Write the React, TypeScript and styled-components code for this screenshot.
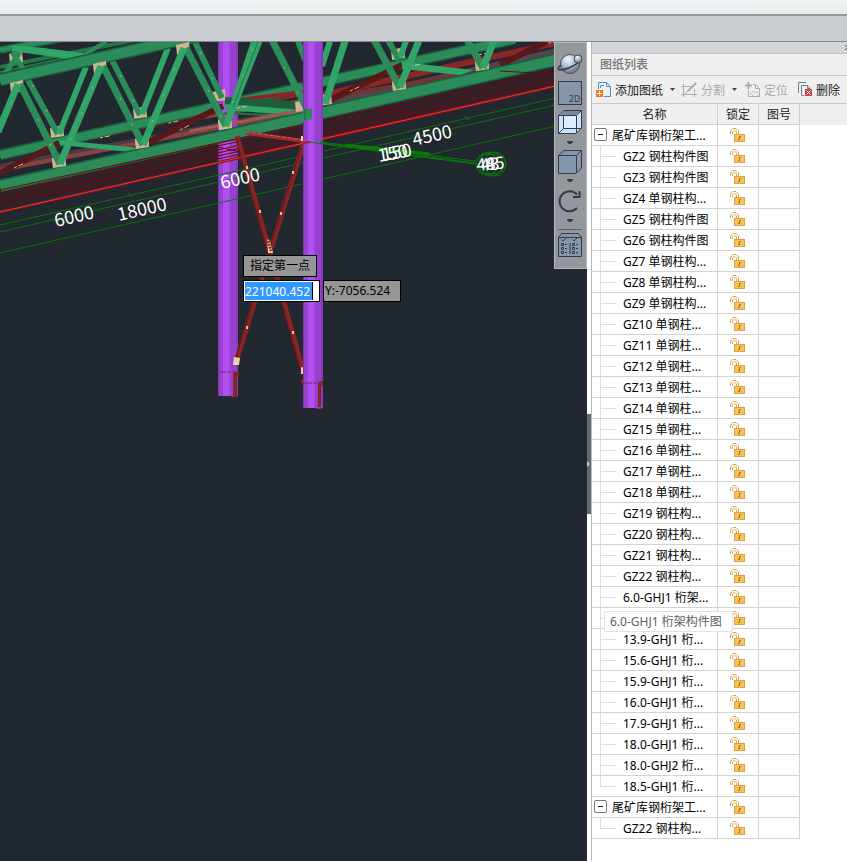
import React from 'react';
import styled, { createGlobalStyle } from 'styled-components';

const GlobalStyle = createGlobalStyle`
  * { box-sizing: border-box; }
  html, body { margin: 0; }
  body, button, input, table {
    font-family: "Noto Sans", "Noto Sans CJK SC", sans-serif;
    font-size: 12px;
    line-height: 16px;
  }
`;

const Page = styled.div`
  display: flex;
  flex-direction: column;
  min-height: 100vh;
  background: #fff;
`;

const WindowBar = styled.header`
  height: 14px;
  background: linear-gradient(#eff3f4, #e7eceb);
`;

const Ribbon = styled.div`
  height: 28px;
  background: #c9cdd2;
  border-top: 2px solid #949a9e;
  border-bottom: 1px solid #858a8f;
`;

const Workspace = styled.main`
  flex: 1;
  display: flex;
`;

const Viewport = styled.section`
  position: relative;
  flex: 1;
  min-width: 0;
  overflow: hidden;
  background: #22282f;
`;

const Drawing = styled.svg`
  position: absolute;
  inset: 0;
  width: 100%;
  height: 100%;
`;

const Prompt = styled.div`
  position: absolute;
  left: 243px;
  top: 213px;
  display: flex;
  flex-direction: column;
  align-items: flex-start;
  gap: 3px;
`;

const PromptRow = styled.div`
  display: flex;
  gap: 3px;
`;

const PromptBox = styled.label<{ $wide?: boolean }>`
  height: 22px;
  width: ${(p) => (p.$wide ? '78px' : '74px')};
  padding: ${(p) => (p.$wide ? '2px 1px' : '2px 6px')};
  border: 1px solid #000;
  background: #969696;
  color: #000;
  white-space: nowrap;
`;

const InputFrame = styled.div`
  display: flex;
  width: 77px;
  height: 22px;
  padding: 1px;
  border: 1px solid #000;
  background: #fff;
`;

const CoordInput = styled.input`
  width: 68px;
  height: 18px;
  padding: 0;
  border: 0;
  border-right: 1px solid #000;
  background: #3399ff;
  color: #fff;
  outline: none;
`;

const ViewTools = styled.nav`
  position: absolute;
  top: 0;
  right: 0;
  display: flex;
  flex-direction: column;
  align-items: center;
  width: 33px;
  height: 227px;
  padding: 6px 1px 0 0;
  background: #94979b;
  border: 1px solid #b7babd;
`;

const ToolButton = styled.button<{ $h: number }>`
  display: flex;
  flex: none;
  align-items: center;
  justify-content: center;
  width: 100%;
  height: ${(p) => p.$h}px;
  padding: 0;
  border: 0;
  background: none;
`;

const ToolRule = styled.div`
  flex: none;
  width: 24px;
  height: 1px;
  margin: 2px 0 1px;
  background: #5c636b;
`;

const Splitter = styled.div`
  display: flex;
  align-items: center;
  flex: none;
  width: 4px;
  padding-top: 25px;
  background: #fff;
`;

const SplitHandle = styled.button`
  display: flex;
  align-items: center;
  width: 4px;
  height: 100px;
  padding: 0;
  border: 0;
  background: #5d6a78;
`;

const Panel = styled.aside`
  flex: none;
  width: 256px;
  overflow: hidden;
  border-left: 1px solid #b9bbbf;
  background: #fff;
`;

const PanelGrip = styled.div`
  display: flex;
  justify-content: flex-end;
  height: 12px;
  background: #d3d5db;
  border-bottom: 1px solid #c3c5c9;
`;

const CloseButton = styled.button`
  flex: none;
  width: 3px;
  padding: 0;
  border: 0;
  overflow: hidden;
  background: none;
  display: flex;
  align-items: center;
`;

const PanelTitle = styled.h2`
  margin: 0;
  height: 22px;
  padding: 3px 8px;
  font-size: 12px;
  font-weight: 500;
  color: #777;
  background: #efefef;
  border-bottom: 1px solid #c9c9c9;
`;

const ActionBar = styled.div`
  display: flex;
  align-items: center;
  height: 28px;
  padding-left: 4px;
  background: #efefef;
  border-bottom: 1px solid #c9c9c9;
`;

const Action = styled.button<{ $gap: number }>`
  display: flex;
  flex: none;
  align-items: center;
  gap: 4px;
  margin-right: ${(p) => p.$gap}px;
  padding: 0;
  border: 0;
  background: none;
  color: #222;
  white-space: nowrap;
  &:disabled { color: #a9a9a9; }
`;

const ActionLabel = styled.span`
  padding-top: 2px;
`;

const Caret = styled.svg`
  flex: none;
  width: 5px;
  height: 3px;
  margin-left: 3px;
`;

const TableArea = styled.div`
  background: linear-gradient(#efefef 21px, #fff 21px);
`;

const Table = styled.table`
  table-layout: fixed;
  width: 208px;
  border-collapse: separate;
  border-spacing: 0;
  color: #000;
`;

const HeadCell = styled.th<{ $w: number }>`
  width: ${(p) => p.$w}px;
  height: 21px;
  padding: 2px 0 0;
  font-weight: 400;
  color: #222;
  background: #efefef;
  border-right: 1px solid #cfcfcf;
  border-bottom: 1px solid #cfcfcf;
`;

const Cell = styled.td`
  position: relative;
  height: 21px;
  padding: 0;
  border-right: 1px solid #d3d3d3;
  border-bottom: 1px solid #d3d3d3;
`;

const Name = styled.div`
  display: flex;
  align-items: flex-start;
  height: 20px;
  padding-left: 2px;
  line-height: 22px;
  white-space: nowrap;
`;

const Expander = styled.button`
  display: flex;
  align-items: center;
  justify-content: center;
  width: 13px;
  height: 13px;
  margin: 3px 5px 0 0;
  padding: 0;
  border: 1px solid #777;
  border-radius: 2px;
  background: #fff;
`;

const Branch = styled.span<{ $last: boolean }>`
  width: 16px;
  height: 20px;
  margin: 0 7px 0 6px;
  background:
    linear-gradient(#dedede, #dedede) 0 0 / 1px ${(p) => (p.$last ? '10px' : '20px')} no-repeat,
    linear-gradient(#dedede, #dedede) 0 10px / 16px 1px no-repeat;
`;

const LockButton = styled.button`
  display: flex;
  justify-content: center;
  width: 100%;
  height: 20px;
  padding: 3px 1px 0 0;
  border: 0;
  background: none;
`;

const Tooltip = styled.div`
  position: absolute;
  z-index: 1;
  left: 12px;
  top: 24px;
  width: 129px;
  height: 21px;
  padding: 2px 5px;
  border: 1px solid #e2e2e2;
  border-radius: 2px;
  background: #fff;
  color: #606060;
  white-space: nowrap;
`;

type Pt = [number, number, number, number];

const G = { mid: '#2b8c5a', light: '#31a467', dark: '#1c5e3d', deep: '#237549' };

function Beam({ p, w, c, edge }: { p: Pt; w: number; c: string; edge?: string }) {
  const [x1, y1, x2, y2] = p;
  return (
    <>
      {edge && <line x1={x1} y1={y1} x2={x2} y2={y2} stroke={edge} strokeWidth={w} />}
      <line x1={x1} y1={y1} x2={x2} y2={y2} stroke={c} strokeWidth={edge ? w - 3 : w} />
    </>
  );
}

function Gusset({ x, y }: { x: number; y: number }) {
  return <path d={`M${x - 7} ${y - 4}L${x + 6} ${y - 7}L${x + 7} ${y + 4}L${x - 6} ${y + 6}Z`} fill="#cdb591" />;
}

const backDiagonals: Pt[] = [
  [28, 80, 58, 134], [112, 60, 140, 115], [195, 42, 222, 98], [297, 38, 305, 60], [387, 38, 399, 60],
];
const backDiagonalsLight: Pt[] = [
  [59, 134, 86, 67], [142, 114, 168, 48], [322, 66, 331, 38], [400, 58, 407, 38],
];
const frontDiagonals: Pt[] = [
  [20, 84, 60, 164], [103, 66, 143, 145], [186, 48, 226, 126], [271, 38, 308, 111], [373, 38, 400, 88], [466, 38, 483, 68],
];
const frontDiagonalsLight: Pt[] = [
  [-2, 132, 18, 84], [60, 164, 101, 66], [143, 145, 184, 48], [325, 104, 346, 38], [400, 87, 420, 38], [483, 68, 495, 38],
];
const cableStarts = [190, 193, 197, 200, 203, 206];
const dimensionLines: Pt[] = [
  [0, 225, 298, 157], [324, 151, 560, 97], [0, 232, 560, 104], [0, 253, 560, 125],
];

function Column({ x, bottom }: { x: number; bottom: number }) {
  return (
    <g>
      <rect x={x} y="38" width="20" height={bottom - 38} fill="#9642cf" />
      <path d={`M${x} ${bottom - 1}l5 1 5-1 5 2 5-1v-2h-20z`} fill="#9642cf" />
      <rect x={x + 5} y="38" width="6" height={bottom - 38} fill="#b14ff2" />
      <rect x={x + 11} y="38" width="1" height={bottom - 38} fill="#a548e3" />
      <rect x={x} y="38" width="1" height={bottom - 38} fill="#7c34ad" />
      <rect x={x + 18} y="38" width="2" height={bottom - 38} fill="#873bbb" />
    </g>
  );
}

function Model() {
  return (
    <Drawing viewBox="0 42 587 819" preserveAspectRatio="xMinYMin slice" aria-label="钢桁架模型">
      <Beam p={[0, 50, 64, 38]} w={8} c={G.mid} edge={G.dark} />
      <Beam p={[0, 67, 140, 39]} w={4} c={G.deep} />
      <Beam p={[0, 72, 92, 52]} w={2} c={G.deep} />
      <Gusset x={16} y={58} />
      <Beam p={[4, 75, 20, 52]} w={5} c={G.mid} />
      <Beam p={[12, 52, 24, 70]} w={5} c={G.mid} />
      <Beam p={[86, 54, 108, 40]} w={4} c={G.mid} />
      <path d="M12 45L44 48 90 54 82 61 12 51Z" fill={G.light} />

      <Beam p={[0, 168, 280, 115]} w={8} c="#4f3a41" />
      <Beam p={[324, 106, 560, 52]} w={9} c="#50474c" />
      <Beam p={[60, 141, 303, 93]} w={6} c="#8a2627" />
      <Beam p={[60, 144, 303, 101]} w={2} c="#541a1c" />
      <Beam p={[0, 170, 303, 111]} w={4} c="#874142" />
      <Beam p={[322, 95, 560, 42]} w={6} c="#8a2627" />
      <Beam p={[322, 98, 560, 59]} w={4} c="#743233" />
      <Beam p={[0, 155, 303, 87]} w={11} c={G.mid} edge={G.dark} />
      <Beam p={[322, 82, 515, 39]} w={11} c={G.mid} edge={G.dark} />
      <Column x={218} bottom={396} />
      <Beam p={[238, 100, 303, 92]} w={4} c="#8a2627" />
      <Beam p={[190, 120, 303, 100]} w={3} c="#874142" />
      <Beam p={[0, 173, 59, 143]} w={6} c="#581719" />
      <Beam p={[143, 145, 223, 106]} w={6} c="#581719" />
      <Beam p={[322, 104, 402, 65]} w={6} c="#581719" />
      <Beam p={[500, 65, 554, 38]} w={6} c="#581719" />

      {[[57, 132], [140, 113], [219, 96], [325, 100], [398, 54]].map(([x, y]) => <Gusset key={x} x={x} y={y} />)}
      {backDiagonals.map((p) => <Beam key={p.join()} p={p} w={6} c={G.mid} />)}
      {backDiagonalsLight.map((p) => <Beam key={p.join()} p={p} w={6} c={G.light} />)}

      <path d="M60 140L140 148 130 152 60 145Z" fill={G.light} />
      <Beam p={[225, 101, 305, 106]} w={8} c={G.dark} />
      <Beam p={[225, 107, 305, 113]} w={6} c={G.light} />
      <Beam p={[225, 113, 290, 116]} w={2} c={G.deep} />
      <path d="M402 62L474 70 460 75 402 69Z" fill={G.light} />
      <Beam p={[190, 131, 303, 110]} w={3} c="#9c5a51" />

      <g stroke="#d9c08f" strokeWidth="1" strokeDasharray="3 2 5 60">
        <path d="M14 168L59 147M100 138L302 94M180 130L222 109M350 91L402 67M410 66L555 42" />
      </g>

      <Beam p={[0, 80, 206, 34]} w={13} c={G.mid} edge={G.dark} />
      {[[17, 87], [100, 68], [183, 49], [59, 162], [142, 143], [225, 124], [302, 106], [399, 85], [482, 65]].map(([x, y]) => (
        <Gusset key={x} x={x} y={y} />
      ))}
      <Beam p={[0, 186, 309, 117]} w={13} c={G.mid} edge={G.dark} />
      <Beam p={[322, 113, 560, 59]} w={13} c={G.mid} edge={G.dark} />
      {[[59, 162], [142, 143], [225, 124], [399, 85], [482, 65]].map(([x, y]) => <Gusset key={x} x={x} y={y} />)}
      {frontDiagonals.map((p) => <Beam key={p.join()} p={p} w={7} c={G.mid} />)}
      {frontDiagonalsLight.map((p) => <Beam key={p.join()} p={p} w={7} c={G.light} />)}
      <path d="M223 126L252 38H264L229 127Z" fill={G.light} />
      <path d="M233 107L258 42" stroke={G.deep} strokeWidth="1" />
      <g stroke="#b0bd8b" strokeWidth="1" strokeDasharray="2 26">
        <path d="M33 85L58 132M38 119L58 161M70 140L98 75M120 75L140 113M120 98L140 142M152 122L180 56M200 52L220 95M208 90L224 123M233 103L254 46M284 67L305 107" />
      </g>

      <g stroke="#74060a" strokeWidth="1">
        {cableStarts.map((y) => <path key={y} d={`M0 ${y}L560 ${y - 121}`} />)}
        <path d="M38 183L95 193M208 145L260 156M380 108L430 116M500 71L553 74" />
      </g>
      <Beam p={[0, 212, 560, 85]} w={3} c="#8e0d12" />
      <Beam p={[0, 212, 560, 85]} w={1} c="#c74548" />
      <g stroke="#067406" strokeWidth="1">
        {dimensionLines.map((p) => <path key={p.join()} d={`M${p[0]} ${p[1]}L${p[2]} ${p[3]}`} />)}
        <path d="M128 193l5 4M465 116l4 4" />
      </g>

      <Beam p={[246, 133, 304, 141]} w={4} c="#9c2c30" />
      <path d="M246 132L304 140" stroke="#d1595c" strokeDasharray="4 2" />
      <Beam p={[237, 136, 304, 374]} w={5} c="#892426" />
      <Beam p={[303, 145, 236, 362]} w={5} c="#892426" />
      <path d="M236 138L301 372M301 148L235 360" stroke="#611617" fill="none" />
      <path d="M247 166v3M260 210v3M281 212v3M293 171v3M247 326v3M293 331v3" stroke="#e4c69c" strokeWidth="2" />
      <path d="M267 239l3 2 3 12h-5zM234 357l6 1-1 7h-6zM301 367l4 1-1 6h-3zM301 136h3v5h-3z" fill="#ecd1a6" />
      <path d="M268 241l3 10" stroke="#892426" strokeWidth="3" strokeDasharray="2 1" />

      <Column x={303} bottom={408} />
      <path d="M303 110l9-2v11l-9 2z" fill={G.mid} />
      <path d="M305 109v11" stroke={G.dark} />
      <Beam p={[303, 143, 310, 142]} w={2} c="#a8202a" />
      <g fill="#892426">
        <path d="M234 372h5v4h-2v21h-4v-23zM320 381h3v5h-2v21h-3v-24zM301 379h2v4h-2z" />
      </g>
      <path d="M217 372h18M303 383h17" stroke="#7b2466" strokeDasharray="4 1" />

      <g fill="none" stroke="#087b08">
        <path d="M309 142L475 164M320 142L475 161M320 143L475 163" strokeWidth="1" />
        <path d="M345 145L430 154" strokeWidth="3" />
        <ellipse cx="487" cy="164" rx="11" ry="11" />
        <ellipse cx="491" cy="164" rx="12" ry="12" />
        <ellipse cx="495" cy="164" rx="11" ry="12" />
        <ellipse cx="491" cy="164" rx="15" ry="10" />
      </g>
      <g fill="#fff" fontFamily="Noto Sans CJK SC, sans-serif" fontSize="18">
        <text transform="translate(56 227) rotate(-13)">6000</text>
        <text transform="translate(119 221) rotate(-13)">18000</text>
        <text transform="translate(222 189) rotate(-13)">6000</text>
        <text transform="translate(414 146) rotate(-13)">4500</text>
        <text transform="translate(379 162) rotate(-10)">150</text>
        <text transform="translate(383 161) rotate(-10)">150</text>
        <g fontSize="17">
          <text transform="translate(477 171) rotate(-5)">48</text>
          <text transform="translate(481 171) rotate(-5)">43</text>
          <text transform="translate(486 170) rotate(-5)">45</text>
        </g>
      </g>
    </Drawing>
  );
}

const ink = '#333d49';

function SphereIcon() {
  return (
    <svg width="26" height="24" viewBox="0 0 26 24">
      <defs>
        <radialGradient id="ball" cx="0.4" cy="0.25" r="0.8">
          <stop offset="0" stopColor="#f4f8fc" />
          <stop offset="0.45" stopColor="#b7c3d0" />
          <stop offset="1" stopColor="#59697c" />
        </radialGradient>
      </defs>
      <circle cx="13" cy="12" r="9.5" fill="url(#ball)" stroke="#46515f" />
      <path d="M4 13C1 15 0 18 3 18 8 18 18 14 22 10" fill="none" stroke={ink} strokeWidth="1.5" />
      <circle cx="21" cy="7" r="4" fill="url(#ball)" stroke="#46515f" />
    </svg>
  );
}

function FlatIcon() {
  return (
    <svg width="24" height="24" viewBox="0 0 24 24">
      <rect x="0.5" y="0.5" width="23" height="23" fill="#8595aa" stroke={ink} />
      <text x="11" y="21" fontSize="8" fontFamily="DejaVu Sans, sans-serif" fill={ink}>2D</text>
    </svg>
  );
}

function CubeIcon({ wire }: { wire?: boolean }) {
  return (
    <svg width="24" height="24" viewBox="0 0 24 24">
      <path d="M.5 5.5L6 .5H23.5V18L18 23.5H.5Z" fill={wire ? '#c9e4fc' : '#8595aa'} stroke={ink} />
      {wire && (
        <>
          <path d="M1.5 5L6 1H23L18 5Z" fill="#77899a" />
          <rect x="6" y="6" width="12" height="12" fill="#dceeff" />
          <path d="M5.5 6V18.5L1 23M5.5 18.5H23" fill="none" stroke={ink} />
        </>
      )}
      <path d="M.5 5.5H18.5V23M18.5 5.5L23.5.5" fill="none" stroke={ink} />
    </svg>
  );
}

function ToolArrow({ label }: { label: string }) {
  return (
    <ToolButton $h={12} aria-label={label}>
      <svg width="6" height="4"><path d="M0 0h6v1L4 3H2L0 1Z" fill={ink} /></svg>
    </ToolButton>
  );
}

function RotateIcon() {
  return (
    <svg width="24" height="24" viewBox="0 0 24 24" fill="none" stroke={ink} strokeWidth="2">
      <path d="M19 19A10 10 0 1 1 19 5.500" />
      <path d="M21.500 2V8H15" />
    </svg>
  );
}

function GridIcon() {
  return (
    <svg width="24" height="24" viewBox="0 0 24 24" fill="none" stroke={ink}>
      <path d="M.5 4.500L3.500.5H20.500L23.500 4.500V23.500H.5Z" fill="#8595aa" />
      <path d="M.5 4.500H23.500M12 10V21M3.500 6.500l1.500 1.500 3-3M14.500 6.500l1.500 1.500 3-3" />
      <path d="M3.500 10.500h2v2h-2zM3.500 14.500h2v2h-2zM3.500 18.500h2v2h-2zM14.500 10.500h2v2h-2zM14.500 14.500h2v2h-2zM14.500 18.500h2v2h-2z" />
      <path d="M7 11.500h2M7 15.500h2M7 19.500h2M18 11.500h2M18 15.500h2M18 19.500h2" />
    </svg>
  );
}

function ViewToolbar() {
  return (
    <ViewTools aria-label="视图工具">
      <ToolButton $h={30} aria-label="动态观察"><SphereIcon /></ToolButton>
      <ToolButton $h={28} aria-label="二维视图"><FlatIcon /></ToolButton>
      <ToolButton $h={30} aria-label="线框"><CubeIcon wire /></ToolButton>
      <ToolArrow label="更多线框" />
      <ToolButton $h={26} aria-label="实体"><CubeIcon /></ToolButton>
      <ToolArrow label="更多实体" />
      <ToolButton $h={28} aria-label="旋转"><RotateIcon /></ToolButton>
      <ToolArrow label="更多旋转" />
      <ToolRule />
      <ToolButton $h={28} aria-label="显示设置"><GridIcon /></ToolButton>
    </ViewTools>
  );
}

function AddIcon() {
  return (
    <svg width="15" height="16" viewBox="0 0 15 16" fill="none" stroke="#4a8fd4">
      <path d="M2.500 7V.5H10.500L14.500 4.500V14.500H8M4.500 6V3.500H8M10.500.5V4.500H14" />
      <rect x="0" y="8" width="7" height="7" fill="#f0771c" stroke="none" />
      <path d="M1 11.500H6M3.500 9V14" stroke="#fff" />
    </svg>
  );
}

function SplitIcon() {
  return (
    <svg width="16" height="16" viewBox="0 0 16 16" fill="none" stroke="#adadad">
      <path d="M0 4.500H10M2.500 2V15M0 12.500H16M13.500 7V15M4 12L7 8" />
      <path d="M7 9L15 1" strokeWidth="2" />
    </svg>
  );
}

function LocateIcon() {
  return (
    <svg width="15" height="16" viewBox="0 0 15 16" fill="none" stroke="#adadad">
      <path d="M0 3.500H7M3.500 0V7" strokeWidth="2" />
      <path d="M8 2.500H10.500L14.500 6.500V14.500H3.500V8M10.500 2.500V6.500H14" />
      <path d="M5 11L8 14M8 9L13 14M11 9L14 12M8 9L5 12M12 9L7 14" strokeDasharray="1 1" />
    </svg>
  );
}

function DeleteIcon() {
  return (
    <svg width="14" height="15" viewBox="0 0 14 15" fill="none" stroke="#6f8490">
      <path d="M.5 11V.5H8M6 13.500H3.500V3.500H9.500L12.500 6.500M9.500 3.500V6.500H12" />
      <rect x="7" y="7" width="7" height="7" fill="#cd3f4a" stroke="none" />
      <path d="M8.500 8.500L12.500 12.500M12.500 8.500L8.500 12.500" stroke="#fff" />
    </svg>
  );
}

function Down() {
  return <Caret viewBox="0 0 5 3"><path d="M0 0H5L2.500 3Z" fill="#444" /></Caret>;
}

function LockIcon() {
  return (
    <svg width="15" height="14" viewBox="0 0 15 14" fill="none">
      <path d="M.5 6V3L3 .5H6L8.500 3V6M2.500 6V4L4 2.500H5L6.500 4V6" stroke="#dba54f" />
      <rect x="4.500" y="6.500" width="10" height="7" fill="#f7c352" stroke="#dd9f51" />
      <path d="M9 8.500H11M9.500 9V11.500M8 11.500H10" stroke="#b36f1e" />
    </svg>
  );
}

interface Row { name: string; root?: boolean; last?: boolean; tip?: string }

const rows: Row[] = [
  { name: '尾矿库钢桁架工...', root: true },
  { name: 'GZ2 钢柱构件图' },
  { name: 'GZ3 钢柱构件图' },
  { name: 'GZ4 单钢柱构...' },
  { name: 'GZ5 钢柱构件图' },
  { name: 'GZ6 钢柱构件图' },
  ...[7, 8, 9].map((n) => ({ name: `GZ${n} 单钢柱构...` })),
  ...[10, 11, 12, 13, 14, 15, 16, 17, 18].map((n) => ({ name: `GZ${n} 单钢柱...` })),
  ...[19, 20, 21, 22].map((n) => ({ name: `GZ${n} 钢柱构...` })),
  { name: '6.0-GHJ1 桁架...', tip: '6.0-GHJ1 桁架构件图' },
  { name: '' },
  ...['13.9-GHJ1', '15.6-GHJ1', '15.9-GHJ1', '16.0-GHJ1', '17.9-GHJ1', '18.0-GHJ1', '18.0-GHJ2'].map((n) => ({ name: `${n} 桁...` })),
  { name: '18.5-GHJ1 桁...', last: true },
  { name: '尾矿库钢桁架工...', root: true },
  { name: 'GZ22 钢柱构...', last: true },
];

function DrawingRow({ row }: { row: Row }) {
  return (
    <tr>
      <Cell>
        <Name>
          {row.root ? (
            <Expander aria-label="折叠">
              <svg width="5" height="1"><path d="M0 .5H5" stroke="#222" /></svg>
            </Expander>
          ) : (
            <Branch $last={!!row.last} />
          )}
          {row.name}
        </Name>
        {row.tip && <Tooltip role="tooltip">{row.tip}</Tooltip>}
      </Cell>
      <Cell><LockButton aria-label="锁定"><LockIcon /></LockButton></Cell>
      <Cell />
    </tr>
  );
}

function DrawingPanel() {
  return (
    <Panel>
      <PanelGrip>
        <CloseButton aria-label="关闭">
          <svg width="7" height="7"><path d="M1 1L6 6M6 1L1 6" stroke="#555" /></svg>
        </CloseButton>
      </PanelGrip>
      <PanelTitle>图纸列表</PanelTitle>
      <ActionBar>
        <Action $gap={6}><AddIcon /><ActionLabel>添加图纸</ActionLabel><Down /></Action>
        <Action $gap={8} disabled><SplitIcon /><ActionLabel>分割</ActionLabel><Down /></Action>
        <Action $gap={10} disabled><LocateIcon /><ActionLabel>定位</ActionLabel></Action>
        <Action $gap={0}><DeleteIcon /><ActionLabel>删除</ActionLabel></Action>
      </ActionBar>
      <TableArea>
        <Table>
          <thead>
            <tr>
              <HeadCell $w={126}>名称</HeadCell>
              <HeadCell $w={41}>锁定</HeadCell>
              <HeadCell $w={41}>图号</HeadCell>
            </tr>
          </thead>
          <tbody>
            {rows.map((row, i) => <DrawingRow key={i} row={row} />)}
          </tbody>
        </Table>
      </TableArea>
    </Panel>
  );
}

export default function App() {
  return (
    <Page>
      <GlobalStyle />
      <WindowBar />
      <Ribbon />
      <Workspace>
        <Viewport>
          <Model />
          <Prompt>
            <PromptBox htmlFor="coord-x">指定第一点</PromptBox>
            <PromptRow>
              <InputFrame><CoordInput id="coord-x" defaultValue="221040.452" /></InputFrame>
              <PromptBox as="output" $wide>Y:-7056.524</PromptBox>
            </PromptRow>
          </Prompt>
          <ViewToolbar />
        </Viewport>
        <Splitter>
          <SplitHandle aria-label="收起面板">
            <svg width="4" height="8"><path d="M0 1L3 4L0 7Z" fill="#c3c8ce" /></svg>
          </SplitHandle>
        </Splitter>
        <DrawingPanel />
      </Workspace>
    </Page>
  );
}
